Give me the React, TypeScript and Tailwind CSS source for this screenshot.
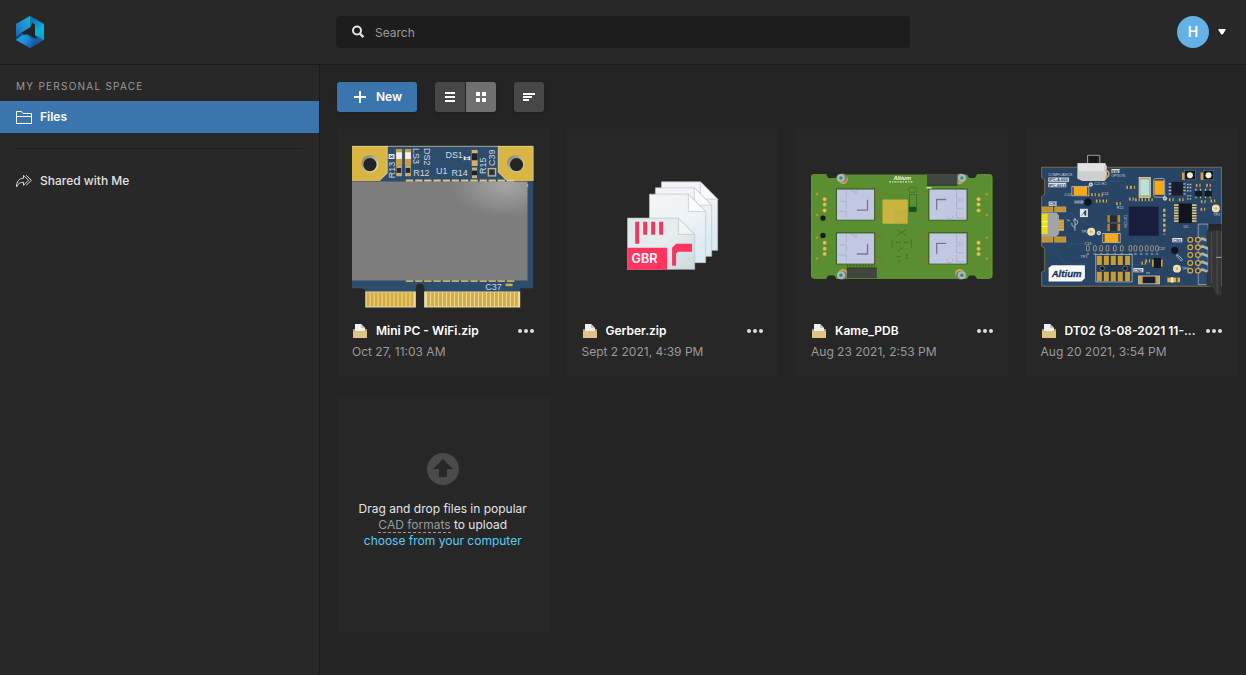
import type { ReactNode } from 'react';

interface FileItem {
  name: string;
  date: string;
  preview: ReactNode;
}

function Logo() {
  return (
    <svg viewBox="48 48 84 96" className="h-8 w-7" aria-hidden="true">
      <defs>
        <linearGradient id="logoLeft" x1="0" y1="1" x2="1" y2="0">
          <stop offset="0" stopColor="#1d62b4" />
          <stop offset="0.5" stopColor="#1f8fce" />
          <stop offset="1" stopColor="#12b4d8" />
        </linearGradient>
        <linearGradient id="logoRight" x1="0" y1="0" x2="0.3" y2="1">
          <stop offset="0" stopColor="#1668b0" />
          <stop offset="0.7" stopColor="#08b4dc" />
          <stop offset="1" stopColor="#10a0d4" />
        </linearGradient>
        <linearGradient id="logoBottom" x1="0" y1="0" x2="1" y2="0.4">
          <stop offset="0" stopColor="#10b0e0" />
          <stop offset="0.5" stopColor="#1e8ed6" />
          <stop offset="1" stopColor="#1a4f9c" />
        </linearGradient>
      </defs>
      <path d="M90 48 132 72v48l-42 24-42-24V72z" fill="#17619f" />
      <path d="M90 48 48 72v38l16-12 28-17z" fill="url(#logoLeft)" />
      <path d="M90 48l8 5v16l-6 13z" fill="#0f7fa0" />
      <path d="M97 52l35 20v48l-27-16V74l-8-6z" fill="url(#logoRight)" />
      <path d="M48 110l16-12 2 12-18 12z" fill="#144783" />
      <path d="M48 120l18-14h16l32 24-24 14z" fill="url(#logoBottom)" />
      <path d="M97 68l8 6v33l8 8-13-2-16-10H70l-6-5 28-16z" fill="#232323" />
    </svg>
  );
}

function FolderIcon() {
  return (
    <svg viewBox="0 0 16 14" className="h-3.5 w-4 shrink-0" aria-hidden="true">
      <path d="M3 0h6l4 4v8H3z" fill="#eef0f2" />
      <path d="M9 0v4h4z" fill="#bfc6cc" />
      <path d="M1 5h2v2h10V5h2v8H1z" fill="#b89a5c" />
      <path d="M1 7h14v7H1z" fill="#e0c283" />
    </svg>
  );
}

function WifiBoard() {
  const topPads = [198, 226, 253, 281, 309, 336, 364, 392, 420, 447, 474, 502];
  const capacitors = [177, 204];
  const leftFingers = [80, 92, 104, 116, 128, 140, 152, 164, 176, 188, 200, 212];
  const rightFingers = [262, 274, 286, 298, 310, 322, 334, 346, 358, 370, 382, 394, 406, 418, 430, 442, 454, 466, 478, 490, 502, 514, 526];
  return (
    <svg viewBox="36 3 546 546" className="aspect-square w-full" role="img" aria-label="Mini PC board">
      <defs>
        <radialGradient id="shieldGlow" cx="0.88" cy="0.04" r="0.32">
          <stop offset="0" stopColor="#a5a5a5" />
          <stop offset="1" stopColor="#7d7d7d" />
        </radialGradient>
        <linearGradient id="holeRim" x1="0" y1="0" x2="1" y2="1">
          <stop offset="0" stopColor="#7b776a" />
          <stop offset="1" stopColor="#f3eed6" />
        </linearGradient>
      </defs>
      <path d="M36 33h545v428h-39v12H254v-12q-2-14-14-14t-12 14v12H76q0-12-12-12H36z" fill="#2e4c6b" />
      <path d="M36 33h106v82l-24 23H36zM476 33h105v105h-78l-27-26z" fill="#d9b544" />
      <path d="M142 33v82l-24 23M476 33v79l27 26" fill="none" stroke="#ece3bd" strokeWidth="2" />
      <path d="M36 34h545v104" fill="none" stroke="#e6dba9" strokeWidth="2" />
      {[90, 528].map((x) => (
        <g key={x}>
          <circle cx={x} cy="86" r="26" fill="url(#holeRim)" />
          <circle cx={x + (x > 300 ? 3 : 0)} cy="89" r="20" fill="#242424" />
        </g>
      ))}
      <path d="M36 140h528v298H36z" fill="url(#shieldGlow)" />
      <path d="M564 148v8" stroke="#9db2c5" strokeWidth="4" />
      {topPads.map((x) => (
        <g key={x}>
          <rect x={x} y="134" width="22" height="6" fill="#ddc983" />
          <rect x={x} y="437" width="22" height="5" fill="#ccb36d" />
        </g>
      ))}
      {capacitors.map((x) => (
        <g key={x}>
          <rect x={x - 9} y="42" width="19" height="49" fill="#c99d43" />
          <rect x={x - 8} y="52" width="17" height="20" fill="#f2f2ee" />
          <rect x={x - 8} y="91" width="17" height="33" fill="#c8ae74" />
          <rect x={x - 7} y="99" width="14" height="15" fill="#242833" />
        </g>
      ))}
      <rect x="396" y="45" width="18" height="48" fill="#d8b166" />
      <rect x="397" y="55" width="17" height="21" fill="#1f222b" />
      <rect x="397" y="98" width="15" height="32" fill="#ccb27a" />
      <rect x="397" y="107" width="15" height="14" fill="#1f222b" />
      <rect x="446" y="101" width="22" height="22" fill="none" stroke="#cbb075" strokeWidth="4" />
      <rect x="450" y="105" width="12" height="14" fill="#263043" />
      <path d="M146 57h18v15h-18zM372 63l9 4 11-4v14l-11-4-9 4z" fill="#dce4ea" />
      <path d="M150 62l10 6M150 68l10-6M377 70h10" stroke="#2e4c6b" strokeWidth="3" />
      <g fill="#cdd9e3" fontFamily="Liberation Sans, sans-serif" fontSize="27">
        <text x="220" y="122">R12</text>
        <text x="289" y="117">U1</text>
        <text x="335" y="123">R14</text>
        <text x="317" y="69">DS1</text>
        <text x="437" y="466">C37</text>
        <text transform="translate(164 130) rotate(-90)">R13</text>
        <text transform="translate(440 117) rotate(-90)">R15</text>
        <text transform="translate(466 93) rotate(-90)">C39</text>
        <text transform="translate(221 39) rotate(90)">LS3</text>
        <text transform="translate(253 39) rotate(90)">DS2</text>
      </g>
      <rect x="498" y="447" width="21" height="8" fill="#d2aa4c" />
      <path d="M76 471h152v48H76zM253 471h289v48H253z" fill="#e9dba4" />
      {[...leftFingers, ...rightFingers].map((x) => (
        <rect key={x} x={x} y="473" width="9" height="43" fill="#d8ab3b" />
      ))}
    </svg>
  );
}

function GerberFiles() {
  return (
    <svg viewBox="35 18 546 546" className="aspect-square w-full" role="img" aria-label="Gerber files">
      <defs>
        <linearGradient id="sheet" x1="0" y1="0" x2="0.6" y2="1">
          <stop offset="0" stopColor="#f3f4f6" />
          <stop offset="0.6" stopColor="#eef2f6" />
          <stop offset="1" stopColor="#dcebf3" />
        </linearGradient>
        <linearGradient id="sheetFront" x1="0" y1="0" x2="1" y2="1">
          <stop offset="0" stopColor="#dde8ea" />
          <stop offset="0.5" stopColor="#e7eeef" />
          <stop offset="1" stopColor="#cbd8da" />
        </linearGradient>
      </defs>
      {[
        [274, 156],
        [256, 174],
        [238, 193],
      ].map(([x, y]) => (
        <g key={x} transform={`translate(${x} ${y})`} stroke="#bcc3ca" strokeWidth="2">
          <path d="M0 0h117l52 52v154H0z" fill="url(#sheet)" />
          <path d="M117 0v52h52z" fill="#fafbfc" />
        </g>
      ))}
      <path d="M172 265h153l49 49v105H172z" fill="url(#sheetFront)" stroke="#b6c2c6" strokeWidth="2" />
      <path d="M325 265v49h49z" fill="#f0f4f5" stroke="#b6c2c6" strokeWidth="2" />
      <path d="M195 276h12v66h-12zM219 276h12v39h-12zM243 276h12v39h-12zM267 276h12v39h-12z" fill="#ef3864" />
      <path d="M306 408v-54l12-12h48v24h-43l-5 6v36z" fill="#f73560" />
      <path d="M171 354h120v66H171z" fill="#ff3560" />
      <text x="184" y="401" fill="#fff" fontFamily="Inter, sans-serif" fontWeight="600" fontSize="38">GBR</text>
    </svg>
  );
}

function KameBoard() {
  const chips = [
    { x: 111, y: 89, right: false },
    { x: 389, y: 89, right: true },
    { x: 111, y: 221, right: false },
    { x: 389, y: 221, right: true },
  ];
  const screws = [
    [123, 54],
    [487, 54],
    [123, 347],
    [487, 347],
  ];
  return (
    <svg viewBox="33 -72 546 546" className="aspect-square w-full" role="img" aria-label="Kame board">
      <path d="M42 42h36l7 12h22l7-10h388l7 10h17l7-12h36q10 0 10 10v296q0 10-10 10h-36l-7-10h-17l-7 10H110l-7-10H85l-7 10H42q-9 0-9-10V52q0-10 9-10z" fill="#5b8e30" />
      <path d="M34 52v296M577 52v296" stroke="#6c9f3b" strokeWidth="2" />
      {screws.map(([x, y]) => (
        <g key={`${x}-${y}`}>
          <circle cx={x + (x < 300 ? 7 : -7)} cy={y + (y < 200 ? 5 : -5)} r="14" fill="#c5a355" />
          <circle cx={x + (x < 300 ? 5 : -5)} cy={y} r="13" fill="#77806f" />
          <circle cx={x} cy={y} r="12" fill="#aeb9b5" />
          <circle cx={x} cy={y} r="5" fill="#268f8d" />
        </g>
      ))}
      {chips.map((c) => (
        <g key={`${c.x}-${c.y}`} transform={`translate(${c.x} ${c.y})`}>
          <rect x="-3" y="-3" width="118" height="96" fill="#31551f" />
          <rect width="112" height="91" fill="#c3c8e2" />
          {c.right ? (
            <g fill="none" stroke="#a2a8c2" strokeWidth="2">
              <path d="M82 3v25h20M102 35H82v23h20M82 65v20h25M54 77v10h13M70 78v8" />
              <path d="M51 30H22v31" stroke="#747992" strokeWidth="4" />
            </g>
          ) : (
            <g fill="none" stroke="#a2a8c2" strokeWidth="2">
              <path d="M28 4v24M8 35h20v22M5 65h23v19M42 5h12v9M58 3v10" />
              <path d="M92 31v31H60" stroke="#747992" strokeWidth="4" />
            </g>
          )}
        </g>
      ))}
      <rect x="248" y="119" width="76" height="73" rx="3" fill="#c9b440" />
      {[151, 158, 165, 172, 179, 186].map((y) => (
        <path key={y} d={`M288 ${y}h34`} stroke="#9d8b2c" strokeWidth="2" strokeDasharray="2 5" />
      ))}
      <rect x="329" y="104" width="21" height="50" fill="none" stroke="#3a6820" strokeWidth="2" />
      <rect x="328" y="141" width="22" height="15" fill="#17501f" />
      <ellipse cx="338" cy="90" rx="13" ry="8" fill="none" stroke="#3f6f22" strokeWidth="2" />
      <path d="M382 44h91v32h-91zM141 325h90v31h-90z" fill="#414641" />
      <path d="M382 76h91M141 325h90" stroke="#28381f" strokeWidth="3" />
      <path d="M141 318h84" stroke="#3a6121" strokeWidth="5" strokeDasharray="5 4" />
      {[118, 134, 152, 249, 267, 283].map((y) => (
        <g key={y} fill="#dfc457" stroke="#9d8429" strokeWidth="1">
          <circle cx="74" cy={y} r="6" />
          <circle cx="537" cy={y} r="6" />
        </g>
      ))}
      {[103, 166, 234, 297].map((y) => (
        <g key={y} fill="#b69532">
          <circle cx="51" cy={y} r="4" />
          <circle cx="562" cy={y} r="4" />
        </g>
      ))}
      <circle cx="69" cy="175" r="8" fill="#151a12" />
      <circle cx="69" cy="227" r="8" fill="#151a12" />
      {[
        [228, 92], [366, 92], [228, 164], [366, 164], [228, 223], [366, 223], [228, 292], [366, 292],
      ].map(([x, y]) => (
        <path key={`${x}-${y}`} d={`M${x} ${y}h19M${x} ${y + 6}h19M${x} ${y + 12}h19`} stroke="#7d7828" strokeWidth="3" strokeDasharray="3 3" />
      ))}
      <path d="M291 210l28 17M319 210l-28 17M277 240v23M335 240v23M288 248h14M312 248h14M294 273l18-9M321 283v16M291 291h12M296 304h9" stroke="#3a6820" strokeWidth="3" strokeDasharray="6 3" />
      <text x="281" y="60" fill="#f2f7e8" fontFamily="Liberation Sans, sans-serif" fontSize="17" fontWeight="700" fontStyle="italic">Altium</text>
      <path d="M268 66h73" stroke="#d8e5c8" strokeWidth="4" strokeDasharray="6 3 4 3" />
      <path d="M380 84h16" stroke="#d8e5c8" strokeWidth="4" />
    </svg>
  );
}

function DevBoard() {
  const passives = [
    [190, 149], [211, 150], [204, 168], [224, 168], [265, 176], [304, 162], [322, 164], [341, 164], [361, 164],
    [296, 127], [308, 127], [424, 164], [454, 164], [505, 121], [536, 121], [519, 193], [520, 170], [549, 168], [341, 355], [353, 348],
  ];
  const connectorPins = [285, 308, 331, 355, 378];
  return (
    <svg viewBox="32 -27 546 546" className="aspect-square w-full" role="img" aria-label="DT02 board">
      <path d="M34 67h541v358H34v-42l9-4v-69l-9-5V155l9-6v-45l-9-6z" fill="#284566" stroke="#a08b42" strokeWidth="2" />
      <g fill="none" stroke="#365578" strokeWidth="2">
        <path d="M230 110h50l38 40M120 205l80 50h44M215 320l-25-23h-70M390 230l42 28v60M280 360h65M395 335l43 35M70 320l40 38h60M470 150l-40 24" />
      </g>
      {/* push button */}
      <path d="M172 54V31h37v23" fill="none" stroke="#9a9a9a" strokeWidth="3" />
      <path d="M178 34h24v22h-24z" fill="#181818" />
      <path d="M142 55h83l5 9v36l-7 8h-67l-15-7z" fill="#cfcfd2" />
      <path d="M142 55h83l-4 24h-77z" fill="#e2e2e3" />
      <path d="M225 76q11 2 11 11t-11 11" fill="none" stroke="#d2a740" strokeWidth="5" />
      {/* capacitors and crystals */}
      {[
        [125, 125, 51, 28], [218, 266, 52, 28],
      ].map(([x, y, w, h]) => (
        <g key={x}>
          <rect x={x} y={y} width={w} height={h} fill="#24364d" stroke="#e6e2d8" strokeWidth="2" />
          <rect x={x + 5} y={y + 1} width={w - 10} height={h - 2} fill="#f6a91c" />
        </g>
      ))}
      <rect x="371" y="101" width="33" height="56" rx="6" fill="#26405f" stroke="#dedbd0" strokeWidth="2" />
      <rect x="373" y="107" width="29" height="43" fill="#f6a91c" />
      <rect x="327" y="98" width="34" height="60" fill="#c5aa62" stroke="#e8e8dd" strokeWidth="2" />
      <rect x="331" y="104" width="26" height="47" fill="#b9dfdf" />
      {/* usb socket */}
      <path d="M35 186h33v16H35zM73 186h34v16H73zM35 276h33v17H35zM73 276h34v17H73z" fill="#c49331" stroke="#e0c277" strokeWidth="1" />
      <path d="M84 224h17v35H84z" fill="#c59230" />
      <path d="M84 230h17M84 238h17M84 246h17M84 254h17" stroke="#e9c879" strokeWidth="2" />
      <path d="M34 203h44l8 9v55l-8 9H34z" fill="#a4a4a5" />
      <path d="M34 207h18v61H34z" fill="#e7df18" />
      <path d="M34 231h18M34 245h18" stroke="#f7f5a6" strokeWidth="3" />
      {/* main ic and packages */}
      <rect x="295" y="184" width="92" height="90" fill="#171d3b" stroke="#354465" strokeWidth="2" />
      <path d="M403 192v77" stroke="#d5b661" strokeWidth="7" strokeDasharray="9 6" />
      {[211, 237].map((y) => (
        <g key={y}>
          <rect x="232" y={y} width="38" height="22" fill="#ba8a32" />
          <rect x="239" y={y} width="23" height="22" fill="#282c38" />
        </g>
      ))}
      {[181, 189, 197, 205, 213, 221, 229].map((y) => (
        <path key={y} d={`M432 ${y}h68`} stroke="#d9c47d" strokeWidth="5" />
      ))}
      <rect x="446" y="176" width="40" height="59" fill="#11141d" />
      <path d="M416 117h51M416 127h51M416 137h51M416 147h51" stroke="#b4bfcc" strokeWidth="4" />
      <rect x="424" y="111" width="36" height="41" fill="#181c2b" />
      {[472, 528].map((x) => (
        <g key={x}>
          <rect x={x - 16} y="83" width="39" height="22" fill="#cda33b" />
          <rect x={x - 8} y="77" width="32" height="28" fill="#111722" stroke="#a9a48e" strokeWidth="1" />
          <circle cx={x + 8} cy="91" r="9" fill="#eff1d4" />
        </g>
      ))}
      {[506, 535].map((x) => (
        <g key={x}>
          <path d={`M${x - 8} 132v30M${x + 6} 132v30`} stroke="#cfbd82" strokeWidth="4" strokeDasharray="7 14" />
          <rect x={x - 11} y="138" width="22" height="17" fill="#141824" />
        </g>
      ))}
      {passives.map(([x, y]) => (
        <g key={`${x}-${y}`}>
          <rect x={x - 7} y={y - 4} width="14" height="9" fill="#c6a75b" />
          <rect x={x - 2} y={y - 5} width="5" height="10" fill="#242f42" />
        </g>
      ))}
      {[173, 194, 213, 232, 254, 275, 301, 316, 333, 350, 366, 381].map((x) => (
        <g key={x}>
          <rect x={x - 4} y="303" width="8" height="16" rx="3" fill="#29374b" stroke="#d5c6a1" strokeWidth="2" />
          <path d={`M${x - 4} 328h8`} stroke="#aab6c3" strokeWidth="3" />
        </g>
      ))}
      {[119, 128, 138, 153, 162].map((y) => (
        <path key={y} d={`M471 ${y}h14`} stroke="#b9c2ca" strokeWidth="4" strokeDasharray="5 3" />
      ))}
      {/* test points */}
      {[
        [183, 261], [558, 191], [441, 372],
      ].map(([x, y]) => (
        <g key={x}>
          <circle cx={x} cy={y} r="12" fill="#efe0b3" />
          <circle cx={x} cy={y} r="4" fill="#d3b466" />
        </g>
      ))}
      {[
        [182, 119], [206, 265], [405, 161],
      ].map(([x, y]) => (
        <circle key={x} cx={x} cy={y} r="5" fill="#7e98b3" stroke="#e8edf0" strokeWidth="3" />
      ))}
      <circle cx="173" cy="172" r="11" fill="#11151b" />
      <circle cx="434" cy="317" r="11" fill="#11151b" />
      {/* pin header footprint */}
      <rect x="197" y="329" width="109" height="83" fill="#213750" stroke="#cfd6db" strokeWidth="2" />
      {[200, 221, 242, 263, 285].map((x) => (
        <path key={x} d={`M${x} 333h15v28h-15zM${x} 381h15v29h-15z`} fill="#c89d38" />
      ))}
      <circle cx="216" cy="371" r="7" fill="#11151b" stroke="#8799ab" strokeWidth="2" />
      <circle cx="285" cy="371" r="7" fill="#11151b" stroke="#8799ab" strokeWidth="2" />
      <path d="M366 345h32v21h-32z" fill="#c8a350" />
      <path d="M371 340h22v30h-22z" fill="#15181f" />
      <rect x="325" y="394" width="64" height="24" fill="#c7a24c" stroke="#c7ced5" strokeWidth="2" />
      <rect x="338" y="396" width="38" height="20" fill="#181d2c" />
      <rect x="412" y="399" width="38" height="14" fill="#e2b545" />
      <rect x="423" y="398" width="7" height="16" fill="#f1ead2" />
      <rect x="438" y="398" width="5" height="16" fill="#5f5640" />
      {/* ribbon connector */}
      <path d="M505 238h30v182h-30z" fill="#2d4c70" stroke="#b8c4d1" strokeWidth="2" />
      {connectorPins.map((y) => (
        <g key={y}>
          <path d={`M504 ${y}l14-3 18 7`} fill="none" stroke="#aeb0ae" strokeWidth="8" />
          <circle cx="481" cy={y} r="7" fill="#2c3544" stroke="#cda447" strokeWidth="4" />
          <circle cx="504" cy={y} r="7" fill="#2c3544" stroke="#cda447" strokeWidth="4" />
        </g>
      ))}
      <path d="M536 238h39v214h-16l-10-23-19-6v-38l5-7v-70l-5-6v-43l6-8z" fill="#343538" />
      <path d="M536 238h39v20h-39z" fill="#252628" />
      <path d="M545 262v154M562 258v188" stroke="#47484b" strokeWidth="4" />
      <path d="M559 338h16" stroke="#aaa" strokeWidth="3" />
      {/* silkscreen */}
      <g fill="none" stroke="#e4e9ed" strokeWidth="2">
        <path d="M134 258v-36M134 249l-9-7v-8M134 242l8-6v-9M129 228l5-7 5 7" />
        <path d="M132 169h24M132 174h24M154 166l6 5-6 5M441 329l17 15-4 5-14-15zM348 385h12M110 225l9 3" />
      </g>
      <path d="M149 192h24v25h-24z" fill="#dfe5ea" />
      <path d="M153 213l12-17h3v17h-5v-6h-5l-3 6z" fill="#26405f" />
      <path d="M54 98h62v13H54zM54 114h54v13H54zM55 170h25v13H55zM244 72h25v12h-25zM427 280h30v13h-30zM310 370h30v13h-30z" fill="#dde4ea" />
      <g fill="#26405f" fontFamily="Liberation Sans, sans-serif" fontWeight="700" fontSize="12">
        <text x="56" y="109">IPC-A-600</text>
        <text x="56" y="125">IPC-6012</text>
        <text x="57" y="181">CN1</text>
        <text x="245" y="83">SW1</text>
        <text x="430" y="291">CN3</text>
        <text x="312" y="381">CN2</text>
      </g>
      <g fill="#c5cfda" fontFamily="Liberation Sans, sans-serif" fontSize="11">
        <text x="54" y="94">COMPLIANCE</text>
        <text x="243" y="97">OPTION</text>
        <text x="192" y="121">C21 R1</text>
        <text x="215" y="151">C24</text>
        <text x="103" y="155">C12</text>
        <text x="153" y="266">TP1</text>
        <text x="151" y="339">TP2</text>
        <text x="385" y="315">C32</text>
        <text x="163" y="300">C13</text>
        <text x="260" y="192">R22</text>
        <text x="550" y="215">TP3</text>
        <text x="456" y="376">TP4</text>
        <text x="461" y="249">U5</text>
        <text transform="translate(292 248) rotate(-90)">MCU01</text>
      </g>
      <path d="M55 369l10-7h99v39l-10 10H55z" fill="#f8fafb" />
      <text x="64" y="396" fill="#1c3a5d" stroke="#1c3a5d" strokeWidth="1" fontFamily="Liberation Sans, sans-serif" fontWeight="700" fontStyle="italic" fontSize="29">Altium</text>
    </svg>
  );
}

const files: FileItem[] = [
  { name: 'Mini PC - WiFi.zip', date: 'Oct 27, 11:03 AM', preview: <WifiBoard /> },
  { name: 'Gerber.zip', date: 'Sept 2 2021, 4:39 PM', preview: <GerberFiles /> },
  { name: 'Kame_PDB', date: 'Aug 23 2021, 2:53 PM', preview: <KameBoard /> },
  { name: 'DT02 (3-08-2021 11-...', date: 'Aug 20 2021, 3:54 PM', preview: <DevBoard /> },
];

function Header() {
  return (
    <header className="flex h-[65px] shrink-0 items-center border-b border-[#1b1b1b] bg-[#282828] pr-5">
      <div className="w-[336px] shrink-0 pl-4">
        <a href="#" aria-label="Home" className="inline-block align-middle">
          <Logo />
        </a>
      </div>
      <label className="flex h-8 max-w-[574px] flex-1 items-center gap-2.5 rounded bg-[#1d1d1d] pl-[15px]">
        <svg viewBox="0 0 14 14" className="size-3.5" aria-hidden="true">
          <circle cx="6" cy="5.5" r="4" fill="none" stroke="#e4e4e4" strokeWidth="2" />
          <path d="M8.8 8.5l3.6 3.7" stroke="#e4e4e4" strokeWidth="2.4" />
        </svg>
        <input
          type="search"
          placeholder="Search"
          aria-label="Search"
          className="h-8 min-w-0 flex-1 bg-transparent text-xs text-white outline-none placeholder:text-[#9b9b9b]"
        />
      </label>
      <button type="button" aria-label="Account menu" className="ml-auto flex items-center gap-[9px]">
        <span className="flex size-8 items-center justify-center rounded-full bg-[#64b1e8] text-sm font-semibold text-white">H</span>
        <svg viewBox="0 0 8 6" className="h-1.5 w-2" aria-hidden="true">
          <path d="M1 0h6q1 0 .6 1L5 5q-1 1-2 0L.4 1Q0 0 1 0z" fill="#fff" />
        </svg>
      </button>
    </header>
  );
}

function Sidebar() {
  return (
    <aside className="w-80 shrink-0 border-r border-[#1b1b1b] bg-[#282828] pt-[9px]">
      <h2 className="mb-[3px] flex h-6 items-center pl-4 text-[10px] tracking-[0.125em] text-[#9a9a9a]">MY PERSONAL SPACE</h2>
      <nav>
        <a href="#" className="flex h-8 items-center gap-2 bg-[#3a76ad] pl-4 text-xs font-semibold text-white">
          <svg viewBox="0 0 16 13" className="h-[13px] w-4" fill="none" stroke="#fff" aria-hidden="true">
            <path d="M.5 12.500V.5h5l1.500 2h8.500v10zM.5 5.500h15" />
          </svg>
          Files
        </a>
        <hr className="mx-4 mt-[15px] mb-4 border-[#1d1d1d]" />
        <a href="#" className="flex h-8 items-center gap-2 pl-4 text-xs font-medium text-[#e2e2e2]">
          <svg viewBox="0 0 16 14" className="h-3.5 w-4" fill="none" stroke="#d8d8d8" strokeLinejoin="round" aria-hidden="true">
            <path d="M.5 13C.5 7.500 3 4.500 7.500 4.200V1.300l5 5-5 5V8.300C4.300 8.200 2 9.500.5 13zM10.200 1.300l5.200 5-5.200 5" />
          </svg>
          Shared with Me
        </a>
      </nav>
    </aside>
  );
}

function Toolbar() {
  return (
    <div className="flex gap-[18px]">
      <button type="button" className="flex h-[30px] w-20 items-center gap-[9px] rounded-[3px] bg-[#3a76ad] pl-4 text-xs font-semibold text-white shadow">
        <svg viewBox="0 0 14 12" className="h-3 w-3.5" aria-hidden="true">
          <path d="M1 6h12M7 0v12" stroke="#fff" strokeWidth="2" />
        </svg>
        New
      </button>
      <div className="flex gap-px overflow-hidden rounded-[3px] bg-[#242424] shadow">
        <button type="button" aria-label="List view" className="flex size-[30px] items-center justify-center bg-[#474747]">
          <svg viewBox="0 0 10 10" className="size-2.5" aria-hidden="true">
            <path d="M0 1h10M0 5h10M0 9h10" stroke="#fff" strokeWidth="2" />
          </svg>
        </button>
        <button type="button" aria-label="Grid view" className="flex size-[30px] items-center justify-center bg-[#707070]">
          <svg viewBox="0 0 10 10" className="size-2.5" fill="#fff" aria-hidden="true">
            <path d="M0 0h4v4H0zM6 0h4v4H6zM0 6h4v4H0zM6 6h4v4H6z" />
          </svg>
        </button>
      </div>
      <button type="button" aria-label="Sort" className="flex size-[30px] items-center justify-center rounded-[3px] bg-[#474747] shadow">
        <svg viewBox="0 0 12 8" className="h-2 w-3" aria-hidden="true">
          <path d="M0 1h12M0 4h9M0 7h6" stroke="#fff" strokeWidth="2" />
        </svg>
      </button>
    </div>
  );
}

function FileCard({ name, date, preview }: FileItem) {
  return (
    <article className="min-w-0 bg-[#272727] px-[15px] pt-[7px] pb-[15px]">
      {preview}
      <div className="mt-1 flex h-[18px] items-center gap-2">
        <FolderIcon />
        <h3 className="min-w-0 flex-1 truncate text-xs font-semibold text-white">{name}</h3>
        <button type="button" aria-label={`More actions for ${name}`}>
          <svg viewBox="0 0 16 4" className="h-1 w-4" fill="#dedede" aria-hidden="true">
            <circle cx="2" cy="2" r="2" />
            <circle cx="8" cy="2" r="2" />
            <circle cx="14" cy="2" r="2" />
          </svg>
        </button>
      </div>
      <p className="mt-0.5 text-xs leading-5 text-[#9a9a9a]">{date}</p>
    </article>
  );
}

function UploadCard() {
  return (
    <section className="flex min-h-[235px] flex-col items-center gap-4 bg-[#272727] pt-14 text-center text-xs leading-4 text-[#e4e4e4]">
      <svg viewBox="0 0 32 32" className="size-8" aria-hidden="true">
        <circle cx="16" cy="16" r="16" fill="#4a4a4a" />
        <path d="M16 6l10 10h-6v8h-8v-8H6z" fill="#282828" />
      </svg>
      <div>
        <p>Drag and drop files in popular</p>
        <p>
          <a href="#" className="border-b border-dashed border-[#9a9a9a] text-[#9a9a9a]">CAD formats</a> to upload
        </p>
        <button type="button" className="block w-full text-[#5ccbf5]">choose from your computer</button>
      </div>
    </section>
  );
}

export default function App() {
  return (
    <div className="flex min-h-screen flex-col bg-[#242424] font-['Inter',sans-serif]">
      <Header />
      <div className="flex flex-1">
        <Sidebar />
        <main className="min-w-0 flex-1 py-[17px] pr-[9px] pl-[17px]">
          <Toolbar />
          <div className="mt-[17px] grid grid-cols-4 gap-x-[18px] gap-y-5">
            {files.map((file) => (
              <FileCard key={file.name} {...file} />
            ))}
            <UploadCard />
          </div>
        </main>
      </div>
    </div>
  );
}
